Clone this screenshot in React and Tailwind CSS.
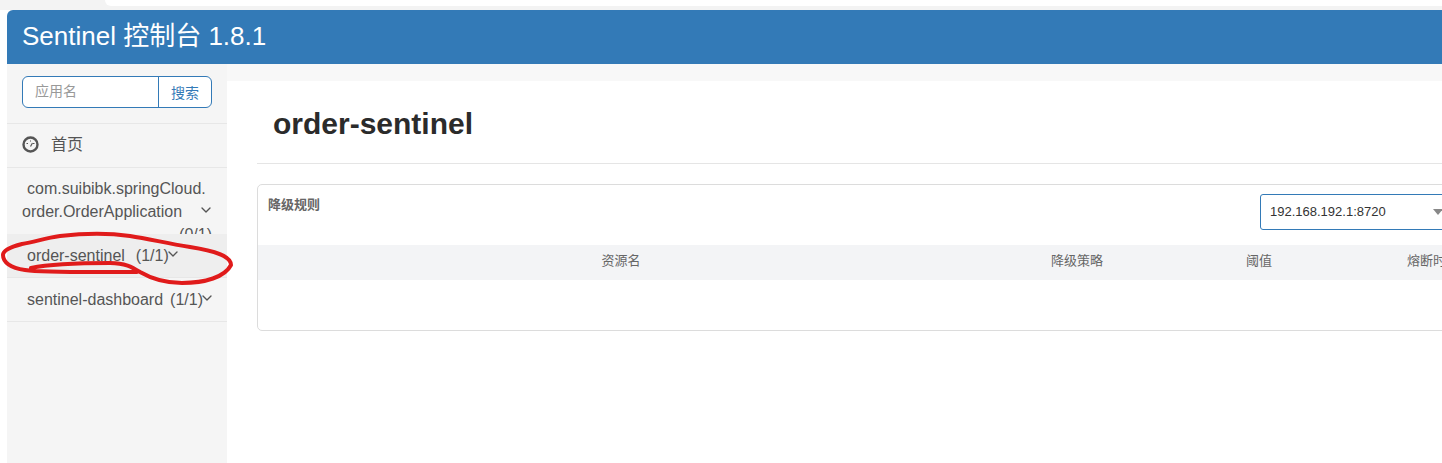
import React from "react";
import { ChevronDown } from "lucide-react";

const font = { fontFamily: '"Liberation Sans", "Noto Sans CJK SC", sans-serif' };

function GaugeIcon() {
  return (
    <svg width="17" height="17" viewBox="0 0 17 17" className="shrink-0">
      <circle cx="8.5" cy="8.5" r="7" fill="none" stroke="#555" strokeWidth="2.4" />
      <path d="M4.5 7.5h1.5M8 5h1M11 7.5h1.5" stroke="#555" strokeWidth="1" />
      <path d="M8.5 10.5l2-3.5" stroke="#555" strokeWidth="1.2" />
    </svg>
  );
}

function Scribble() {
  return (
    <svg
      className="absolute left-0 top-[225px] pointer-events-none"
      width="240"
      height="65"
      viewBox="0 0 240 65"
      fill="none"
    >
      <path
        d="M31 43 C50 39 85 38 110 38 C125 38 132 42 140 47 C152 54 165 58 182 58 C205 58 225 52 231 40 C231 31 215 26 190 22 C165 18 150 14 130 11 C110 8 85 8 60 11 C45 13 35 17 22 19 C10 22 3 26 3 30 C3 37 10 43 25 45 C45 48 100 47 137 47"
        stroke="#e01b1b"
        strokeWidth="4"
        strokeLinecap="round"
        strokeLinejoin="round"
      />
    </svg>
  );
}

function AppRow({ name, count, active }) {
  return (
    <div
      className={`flex items-start h-[44px] pl-5 pt-[12px] border-b border-[#e7e7e7] text-[16px] leading-[20px] text-[#555] ${
        active ? "bg-[#eeeeee]" : ""
      }`}
    >
      <span className="whitespace-pre">{name}</span>
      <span className={active ? "ml-[11px]" : "ml-[7px]"}>({count})</span>
      <ChevronDown size={16} strokeWidth={2} className="ml-[-4px]" />
    </div>
  );
}

export default function App() {
  const columns = [
    { label: "资源名", cls: "w-[726px]" },
    { label: "降级策略", cls: "w-[186px]" },
    { label: "阈值", cls: "w-[178px]" },
    { label: "熔断时长", cls: "w-[170px]" },
  ];

  return (
    <div className="relative h-[463px] w-[1442px] overflow-hidden bg-white" style={font}>
      <div className="h-[10px] pl-[105px] bg-[#f3f3f3]">
        <div className="h-[6px] bg-white rounded-bl-[8px]" />
      </div>

      <div className="ml-[7px] flex flex-col h-[453px]">
        <header className="h-[54px] shrink-0 bg-[#337ab7] rounded-tl-[6px] pl-[15px] pb-[2px] flex items-center text-white text-[26px]">
          Sentinel 控制台 1.8.1
        </header>

        <div className="flex flex-1 min-h-0">
          <aside className="w-[220px] shrink-0 bg-[#f5f5f5] text-[#555]">
            <div className="h-[60px] pt-[12px] pl-[15px] border-b border-[#e7e7e7]">
              <div className="flex w-[190px] h-[32px] border border-[#337ab7] rounded-[6px] bg-white overflow-hidden text-[14px]">
                <div className="w-[136px] pl-3 leading-[29px] text-[#999] border-r border-[#337ab7]">应用名</div>
                <div className="flex-1 text-center leading-[32px] text-[#337ab7]">搜索</div>
              </div>
            </div>
            <div className="h-[44px] flex items-center pl-[15px] pb-[2px] border-b border-[#e7e7e7] text-[16px]">
              <GaugeIcon />
              <span className="ml-[12px]">首页</span>
            </div>
            <div className="h-[66px] overflow-hidden text-[16px] leading-[23px] text-[#555]">
              <div className="pl-5 pt-[9px]">com.suibibk.springCloud.</div>
              <div className="pl-[15px] flex items-center">
                order.OrderApplication
                <ChevronDown size={16} strokeWidth={2} className="ml-[16px] mt-[-3px]" />
              </div>
              <div className="text-right pr-[15px]">(0/1)</div>
            </div>
            <AppRow name="order-sentinel" count="1/1" active />
            <AppRow name="sentinel-dashboard" count="1/1" />
          </aside>

          <main className="flex-1 min-w-0 bg-[#f8f8f8] pt-[17px]">
            <div className="h-full bg-white pl-[30px]">
              <div className="h-[83px] border-b border-[#e5e5e5] pl-4 pt-[2px] flex items-center">
                <h1 className="text-[30px] font-bold text-[#2b2b2b]">order-sentinel</h1>
              </div>

              <section className="mt-[20px] w-[1200px] h-[147px] border border-[#dcdcdc] rounded-[5px] bg-white">
                <div className="h-[60px] flex items-start justify-between">
                  <h2 className="pl-[10px] pt-[11px] text-[13px] leading-[18px] font-bold text-[#666]">降级规则</h2>
                  <div className="mt-[9px] w-[190px] h-[36px] border border-[#337ab7] rounded-[3px] mr-[6px] pl-[9px] flex items-center justify-between text-[13px] text-[#333]">
                    192.168.192.1:8720
                    <span className="mr-[6px] w-0 h-0 border-x-[5px] border-t-[6px] border-x-transparent border-t-[#888]" />
                  </div>
                </div>
                <div className="h-[35px] bg-[#f3f4f6] flex text-[13px] leading-[32px] text-[#666]">
                  {columns.map((c) => (
                    <div key={c.label} className={`${c.cls} shrink-0 text-center whitespace-nowrap`}>
                      {c.label}
                    </div>
                  ))}
                </div>
              </section>
            </div>
          </main>
        </div>
      </div>

      <Scribble />
    </div>
  );
}
